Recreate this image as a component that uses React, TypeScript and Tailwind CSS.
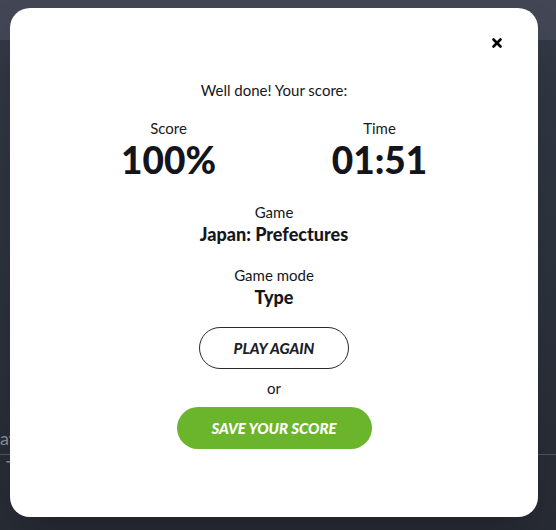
import { X } from 'lucide-react'

const font = { fontFamily: 'Lato, "Noto Sans", sans-serif' }

const Stat = ({ label, value }: { label: string; value: string }) => (
  <div className="flex w-[211px] flex-col items-center">
    <span className="text-[15px] leading-[20px] text-[#1b1b22]">{label}</span>
    <span className="text-[37px] font-black leading-[44px] text-[#14141c]">{value}</span>
  </div>
)

const ScoreModal = () => (
  <div className="relative ml-[10px] mt-[8px] h-[509px] w-[528px] rounded-[20px] bg-white shadow-2xl">
    <button className="absolute right-[34px] top-[28px] text-black">
      <X size={14} strokeWidth={4.5} />
    </button>
    <div className="flex flex-col items-center pt-[72px] text-[#16161d]">
      <p className="text-[15px] leading-[20px]">Well done! Your score:</p>
      <div className="mt-[18px] flex justify-center">
        <Stat label="Score" value="100%" />
        <Stat label="Time" value="01:51" />
      </div>
      <p className="mt-[20px] text-[15px] leading-[20px]">Game</p>
      <p className="text-[18px] font-black leading-[24px]">Japan: Prefectures</p>
      <p className="mt-[19px] text-[15px] leading-[20px]">Game mode</p>
      <p className="text-[18px] font-black leading-[24px]">Type</p>
      <button className="mt-[18px] h-[42px] w-[150px] rounded-full border border-[#2a2a30] text-[15px] font-black italic text-[#1e1e26]">
        PLAY AGAIN
      </button>
      <p className="mt-[9px] text-[15px] leading-[20px]">or</p>
      <button className="mt-[9px] h-[42px] w-[195px] rounded-full bg-[#6bb52c] text-[15px] font-black italic text-white">
        SAVE YOUR SCORE
      </button>
    </div>
  </div>
)

export default function App() {
  return (
    <div className="relative h-[530px] w-[556px] overflow-hidden bg-[#373e4b]" style={font}>
      {/* page behind the dialog */}
      <div className="h-[40px] bg-[#4b505f]" />
      <div className="flex h-[490px] flex-col bg-gradient-to-b from-[#38404d] to-[#2d313b] pt-[386px] text-[#9aa0aa]">
        <span className="text-[18px] leading-[24px]">av</span>
        <span className="mt-[4px] border-t border-[#5a606b] pl-[6px] text-[18px] leading-[24px]">T</span>
        <span className="mt-[22px] pl-[46px] text-[16px] leading-[20px]">Tomam</span>
      </div>
      <div className="absolute inset-0 bg-black/10">
        <ScoreModal />
      </div>
    </div>
  )
}
